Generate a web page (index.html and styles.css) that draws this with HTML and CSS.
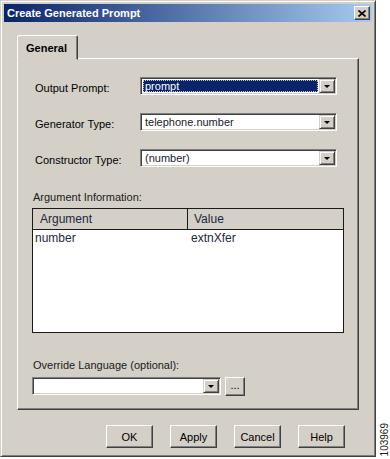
FILE: index.html
```html
<!DOCTYPE html>
<html lang="en">
<head>
    <meta charset="UTF-8">
    <meta name="viewport" content="width=device-width, initial-scale=1.0">
    <title>Create Generated Prompt</title>
    <link rel="stylesheet" href="styles.css">
</head>
<body>
    <div class="screen">
        <div class="dialog">
            <div class="titlebar">
                <span class="title">Create Generated Prompt</span>
                <span class="close">
                    <svg width="8" height="7" viewBox="0 0 8 7">
                        <path d="M0.5 0.5 L7.5 6.5 M7.5 0.5 L0.5 6.5" stroke="#000" stroke-width="1.6" fill="none"/>
                    </svg>
                </span>
            </div>

            <div class="content">
                <div class="tabs">
                    <div class="tab">General</div>
                </div>

                <div class="panel">
                    <div class="fields">
                        <label class="field-label">Output Prompt:</label>
                        <div class="combo">
                            <div class="combo-value focused"><span>prompt</span></div>
                            <div class="arrow"><i></i></div>
                        </div>

                        <label class="field-label">Generator Type:</label>
                        <div class="combo">
                            <div class="combo-value">telephone.number</div>
                            <div class="arrow"><i></i></div>
                        </div>

                        <label class="field-label">Constructor Type:</label>
                        <div class="combo">
                            <div class="combo-value">(number)</div>
                            <div class="arrow"><i></i></div>
                        </div>
                    </div>

                    <div class="section-label arg-label">Argument Information:</div>
                    <div class="grid-table">
                        <div class="grid-head">
                            <div class="col-arg">Argument</div>
                            <div class="col-val">Value</div>
                        </div>
                        <div class="grid-row">
                            <div class="col-arg">number</div>
                            <div class="col-val">extnXfer</div>
                        </div>
                    </div>

                    <div class="section-label lang-label">Override Language (optional):</div>
                    <div class="lang-row">
                        <div class="combo lang-combo">
                            <div class="combo-value"></div>
                            <div class="arrow"><i></i></div>
                        </div>
                        <button class="btn browse">...</button>
                    </div>
                </div>

                <div class="buttons">
                    <button class="btn">OK</button>
                    <button class="btn">Apply</button>
                    <button class="btn">Cancel</button>
                    <button class="btn">Help</button>
                </div>
            </div>
        </div>
        <div class="watermark">103969</div>
    </div>
</body>
</html>
```

FILE: styles.css
```css
:root {
    --face: #d4d0c8;
    --shadow: #808080;
    --dark: #404040;
    --title-dark: #0a246a;
    --title-light: #a6caf0;
    --text: #000000;
}

* {
    box-sizing: border-box;
}

body {
    margin: 0;
    background: #ffffff;
    font-family: 'Liberation Sans', Arial, sans-serif;
    font-size: 11px;
    color: var(--text);
}

.screen {
    display: flex;
    align-items: flex-end;
    width: 390px;
    height: 459px;
}

.dialog {
    width: 376px;
    height: 457px;
    margin-bottom: 2px;
    padding: 3px;
    background: var(--face);
    border: 1px solid;
    border-color: var(--face) var(--dark) var(--dark) var(--face);
    box-shadow: inset 1px 1px #ffffff, inset -1px -1px var(--shadow);
}

.titlebar {
    height: 18px;
    display: flex;
    align-items: center;
    justify-content: space-between;
    padding: 0 2px 0 3px;
    background: linear-gradient(to right, var(--title-dark), var(--title-light));
}

.title {
    color: #ffffff;
    font-weight: bold;
    font-size: 11px;
}

.close {
    width: 16px;
    height: 14px;
    display: flex;
    align-items: center;
    justify-content: center;
    background: var(--face);
    border: 1px solid;
    border-color: #ffffff var(--dark) var(--dark) #ffffff;
    box-shadow: inset -1px -1px var(--shadow);
}

.content {
    padding: 13px 12px 0 13px;
}

.tabs {
    display: flex;
    height: 23px;
}

.tab {
    width: 61px;
    height: 25px;
    padding: 6px 0 0 8px;
    font-weight: bold;
    background: var(--face);
    border: 1px solid;
    border-color: #ffffff var(--dark) transparent #ffffff;
    border-radius: 2px 2px 0 0;
    box-shadow: inset -1px 0 var(--shadow);
    position: relative;
    z-index: 1;
}

.panel {
    width: 342px;
    height: 352px;
    padding: 18px 14px 0 14px;
    border: 1px solid;
    border-color: #ffffff var(--dark) var(--dark) #ffffff;
    box-shadow: inset -1px -1px var(--shadow);
}

.fields {
    display: grid;
    grid-template-columns: 108px 197px;
    grid-auto-rows: 18px;
    row-gap: 18px;
    align-items: center;
}

.field-label {
    padding-left: 3px;
    padding-top: 3px;
}

.combo {
    display: flex;
    height: 18px;
    background: #ffffff;
    border: 1px solid;
    border-color: var(--shadow) #ffffff #ffffff var(--shadow);
    box-shadow: inset 1px 1px var(--dark), inset -1px -1px var(--face);
    padding: 2px;
}

.combo-value {
    flex: 1;
    padding-left: 2px;
    line-height: 12px;
    font-size: 11px;
    color: #1a1a2a;
}

.combo-value.focused {
    background: var(--title-dark);
    color: #ffffff;
    outline: 1px dotted #c8c8c8;
    outline-offset: -1px;
    margin-right: 1px;
}

.arrow {
    width: 16px;
    margin: -1px -1px -1px 0;
    display: flex;
    align-items: center;
    justify-content: center;
    background: var(--face);
    border: 1px solid;
    border-color: var(--face) var(--dark) var(--dark) var(--face);
    box-shadow: inset 1px 1px #ffffff, inset -1px -1px var(--shadow);
}

.arrow i {
    width: 0;
    height: 0;
    border-left: 3px solid transparent;
    border-right: 3px solid transparent;
    border-top: 3px solid #000000;
    margin-top: 1px;
}

.section-label {
    height: 14px;
    line-height: 14px;
    padding-left: 1px;
    color: #1a1a1a;
}

.arg-label {
    margin-top: 23px;
    margin-bottom: 4px;
}

.grid-table {
    width: 312px;
    height: 125px;
    background: #ffffff;
    border: 1px solid #1a1a1a;
    font-size: 12px;
    color: #1e2640;
}

.grid-head {
    display: flex;
    height: 21px;
    line-height: 20px;
    background: var(--face);
    border-bottom: 1px solid #1a1a1a;
}

.grid-head .col-arg {
    width: 155px;
    padding-left: 7px;
    border-right: 1px solid #1a1a1a;
}

.grid-head .col-val {
    padding-left: 6px;
}

.grid-row {
    display: flex;
    height: 16px;
    line-height: 16px;
}

.grid-row .col-arg {
    width: 155px;
    padding-left: 2px;
}

.grid-row .col-val {
    padding-left: 3px;
}

.lang-label {
    margin-top: 25px;
    margin-bottom: 5px;
}

.lang-row {
    display: flex;
    gap: 4px;
}

.lang-combo {
    width: 189px;
}

.btn {
    font-family: 'Liberation Sans', Arial, sans-serif;
    font-size: 11px;
    color: #000000;
    background: var(--face);
    border: 1px solid;
    border-color: #ffffff var(--dark) var(--dark) #ffffff;
    box-shadow: inset -1px -1px var(--shadow);
    padding: 0;
    width: 47px;
    height: 23px;
}

.browse {
    width: 20px;
    height: 19px;
    line-height: 10px;
    padding-bottom: 4px;
}

.buttons {
    display: flex;
    justify-content: flex-end;
    gap: 17px;
    margin-top: 15px;
    padding-right: 15px;
}

.watermark {
    writing-mode: vertical-rl;
    transform: rotate(180deg);
    font-size: 10px;
    color: #222222;
    margin: 0 0 3px 3px;
}
```
